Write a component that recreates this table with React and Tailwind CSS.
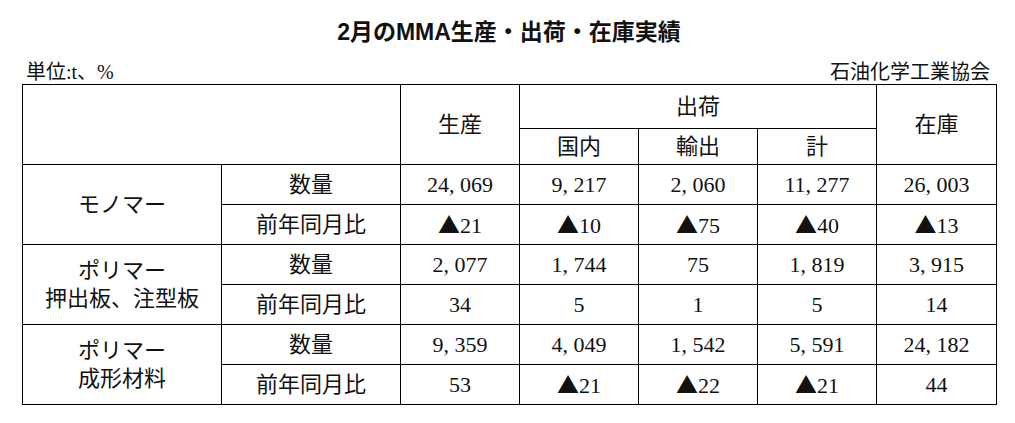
import { Fragment } from "react";

const COLS = [199, 179, 119, 119, 119, 119, 120];

const GROUPS = [
  {
    label: ["モノマー"],
    qty: ["24, 069", "9, 217", "2, 060", "11, 277", "26, 003"],
    ratio: ["▲21", "▲10", "▲75", "▲40", "▲13"],
  },
  {
    label: ["ポリマー", "押出板、注型板"],
    qty: ["2, 077", "1, 744", "75", "1, 819", "3, 915"],
    ratio: ["34", "5", "1", "5", "14"],
  },
  {
    label: ["ポリマー", "成形材料"],
    qty: ["9, 359", "4, 049", "1, 542", "5, 591", "24, 182"],
    ratio: ["53", "▲21", "▲22", "▲21", "44"],
  },
];

const cell = "border border-black text-center align-middle p-0 font-normal";

// ▲ comes from the CJK font so it is full width like the original
const Value = ({ v }) =>
  v.startsWith("▲") ? (
    <>
      <span className="font-['Noto_Sans_CJK_JP',sans-serif]">▲</span>
      {v.slice(1)}
    </>
  ) : (
    v
  );

const App = () => {
  return (
    <div className="h-[423px] w-[1015px] bg-white pl-[22px] text-[#111]">
      <div className="w-[974px]">
        <h1 className="pt-[17px] text-center font-['Liberation_Sans','Noto_Sans_CJK_JP',sans-serif] text-[23px] font-bold leading-[30px]">
          2月のMMA生産・出荷・在庫実績
        </h1>

        <div className="flex h-[37px] items-end justify-between pl-[4px] pr-[6px] font-['Liberation_Serif','Noto_Sans_CJK_JP',serif] text-[20px] leading-[24px]">
          <span>単位:t、%</span>
          <span>石油化学工業協会</span>
        </div>

        <table className="w-[974px] table-fixed border-collapse font-['Liberation_Serif','Noto_Sans_CJK_JP',serif] text-[22px] leading-[28px]">
          <colgroup>
            {COLS.map((w, i) => (
              <col key={i} style={{ width: w }} />
            ))}
          </colgroup>
          <thead>
            <tr className="h-[44px]">
              <th colSpan={2} rowSpan={2} className={cell} />
              <th rowSpan={2} className={cell}>
                生産
              </th>
              <th colSpan={3} className={cell}>
                出荷
              </th>
              <th rowSpan={2} className={cell}>
                在庫
              </th>
            </tr>
            <tr className="h-[36px]">
              <th className={cell}>国内</th>
              <th className={cell}>輸出</th>
              <th className={cell}>計</th>
            </tr>
          </thead>
          <tbody>
            {GROUPS.map((g, gi) => (
              <Fragment key={gi}>
                <tr className="h-[40px]">
                  <td rowSpan={2} className={cell}>
                    {g.label.map((line) => (
                      <div key={line}>{line}</div>
                    ))}
                  </td>
                  <td className={cell}>数量</td>
                  {g.qty.map((v, i) => (
                    <td key={i} className={cell}>
                      {v}
                    </td>
                  ))}
                </tr>
                <tr className="h-[40px]">
                  <td className={cell}>前年同月比</td>
                  {g.ratio.map((v, i) => (
                    <td key={i} className={cell}>
                      <Value v={v} />
                    </td>
                  ))}
                </tr>
              </Fragment>
            ))}
          </tbody>
        </table>
      </div>
    </div>
  );
};

export default App;
